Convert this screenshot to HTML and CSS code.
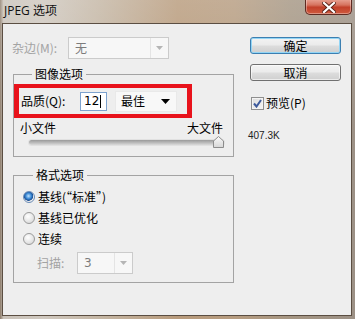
FILE: index.html
```html
<!DOCTYPE html>
<html lang="zh-CN">
<head>
<meta charset="utf-8">
<title>JPEG 选项</title>
<link rel="stylesheet" href="styles.css">
</head>
<body>
<div class="window">
  <div class="titlebar">
    <span class="title">JPEG 选项</span>
    <div class="close">
      <svg width="14" height="11" viewBox="0 0 14 11">
        <path d="M2 1 L12 10 M12 1 L2 10" stroke="#5a2218" stroke-width="4" stroke-linecap="square"/>
        <path d="M2 1 L12 10 M12 1 L2 10" stroke="#ffffff" stroke-width="2.2" stroke-linecap="square"/>
      </svg>
    </div>
  </div>
  <div class="client">
    <div class="left">
      <div class="matte-row">
        <span class="matte-label">杂边(M):</span>
        <div class="select disabled matte">
          <span class="val">无</span>
          <span class="drop"><svg width="7" height="4" viewBox="0 0 7 4"><path d="M0 0 H7 L3.5 4 Z" fill="#b5b5b5"/></svg></span>
        </div>
      </div>
      <fieldset class="group image-group">
        <legend>图像选项</legend>
        <div class="highlight">
          <span class="q-label">品质(Q):</span>
          <div class="input">12<span class="caret"></span></div>
          <div class="select quality">
            <span class="val">最佳</span>
            <svg width="9" height="5" viewBox="0 0 9 5"><path d="M0 0 H9 L4.5 5 Z" fill="#000"/></svg>
          </div>
        </div>
        <div class="size-labels"><span>小文件</span><span>大文件</span></div>
        <div class="slider">
          <div class="track"></div>
          <svg class="thumb" width="11" height="12" viewBox="0 0 11 12">
            <defs>
              <linearGradient id="tg" x1="0" y1="0" x2="0" y2="1">
                <stop offset="0" stop-color="#fbfbfb"/>
                <stop offset="1" stop-color="#d6d6d6"/>
              </linearGradient>
            </defs>
            <path d="M0.5 11.5 V5 L5.5 0.5 L10.5 5 V11.5 Z" fill="url(#tg)" stroke="#8c8c8c"/>
          </svg>
        </div>
      </fieldset>
      <fieldset class="group format-group">
        <legend>格式选项</legend>
        <div class="radio-row"><span class="radio checked"></span><span>基线(“标准”)</span></div>
        <div class="radio-row"><span class="radio"></span><span>基线已优化</span></div>
        <div class="radio-row"><span class="radio"></span><span>连续</span></div>
        <div class="scan-row">
          <span class="scan-label">扫描:</span>
          <div class="select disabled scan">
            <span class="val">3</span>
            <span class="drop"><svg width="7" height="4" viewBox="0 0 7 4"><path d="M0 0 H7 L3.5 4 Z" fill="#b5b5b5"/></svg></span>
          </div>
        </div>
      </fieldset>
    </div>
    <div class="right">
      <div class="btn default">确定</div>
      <div class="btn">取消</div>
      <div class="check-row">
        <span class="checkbox">
          <svg width="9" height="9" viewBox="0 0 9 9"><path d="M1 4.5 L3.5 7.5 L8 1" fill="none" stroke="#3d5a9c" stroke-width="2"/></svg>
        </span>
        <span>预览(P)</span>
      </div>
      <div class="filesize">407.3K</div>
    </div>
  </div>
</div>
</body>
</html>
```
FILE: styles.css
```css
* { box-sizing: border-box; }
html, body { margin: 0; padding: 0; }
body {
  width: 355px;
  height: 319px;
  overflow: hidden;
  font-family: "Noto Sans CJK SC", sans-serif;
  font-size: 12px;
  color: #000;
}
.window {
  height: 319px;
  display: flex;
  flex-direction: column;
  padding: 0 3px 3px 2px;
  background:
    linear-gradient(180deg, rgba(255,255,255,0.18) 0%, rgba(255,255,255,0) 40%),
    linear-gradient(90deg, #8c7b6a 0%, #c9c2b9 1%, #cfc8bf 12%, #c4b6a4 28%, #b89b7c 50%, #b69c80 66%, #a59683 82%, #9c9186 100%);
}
.titlebar {
  height: 23px;
  flex: none;
  display: flex;
  justify-content: space-between;
  align-items: flex-start;
}
.title {
  font-family: "Open Sans", "Noto Sans CJK SC", sans-serif;
  font-size: 12px;
  line-height: 14px;
  padding-top: 4px;
  margin-left: 2px;
  color: #111;
}
.close {
  width: 47px;
  height: 16px;
  margin-top: -1px;
  border: 1px solid #5e2a22;
  border-top: none;
  border-radius: 0 0 5px 5px;
  background: linear-gradient(180deg, #e9a596 0%, #d6735f 40%, #c2402a 55%, #cf5a3e 100%);
  box-shadow: inset 0 0 0 1px rgba(255,255,255,0.35);
  display: flex;
  align-items: center;
  justify-content: center;
  padding-top: 1px;
}
.client {
  flex: 1;
  background: #eeeeee;
  border: 1px solid #5b4e42;
  display: flex;
  padding: 13px 0 0 10px;
}
.left { width: 221px; flex: none; }
.right { width: 91px; flex: none; margin-left: 16px; display: flex; flex-direction: column; }

.matte-row { display: flex; align-items: center; height: 22px; }
.matte-label { width: 56px; color: #a3a3a3; line-height: 14px; margin-left: -1px; }

.select {
  display: flex;
  align-items: center;
  line-height: 14px;
}
.select.disabled {
  border: 1px solid #cbcbcb;
  background: #f7f7f7;
  height: 22px;
}
.select.disabled .val { flex: 1; padding-left: 6px; color: #7c7c7c; }
.select.disabled .drop {
  width: 18px;
  height: 100%;
  border-left: 1px solid #e4e4e4;
  display: flex;
  align-items: center;
  justify-content: center;
}
.matte { width: 101px; }
.scan { width: 56px; }
.scan .val { font-family: "DejaVu Sans", sans-serif; font-size: 12px; }

.group {
  margin: 0;
  padding: 0;
  min-width: 0;
  border: 1px solid #a3a3a3;
}
.group legend {
  padding: 0 3px;
  line-height: 14px;
  font-size: 12px;
}
.image-group { margin-top: 8px; padding-bottom: 8px; }
.image-group legend { margin-left: 18px; }
.format-group { margin-top: 11px; padding-bottom: 8px; }
.format-group legend { margin-left: 19px; }

.highlight {
  margin-top: 3px;
  width: 178px;
  height: 34px;
  border-style: solid;
  border-color: #e8121b;
  border-width: 4px 5px;
  display: flex;
  align-items: center;
}
.q-label { width: 61px; padding-left: 2px; line-height: 14px; }
.input {
  width: 27px;
  height: 19px;
  border: 1px solid #7da2ce;
  background: #fff;
  padding-left: 3px;
  line-height: 17px;
  display: flex;
  align-items: center;
  font-family: "DejaVu Sans", sans-serif;
  font-size: 12px;
}
.caret { width: 1px; height: 13px; background: #000; margin-left: 1px; }
.quality {
  width: 62px;
  height: 21px;
  margin-left: 8px;
  background: #f8f8f8;
  border: 1px solid #e9e9e9;
  padding: 0 6px 0 5px;
  justify-content: space-between;
}

.size-labels {
  margin-top: 3px;
  display: flex;
  justify-content: space-between;
  padding: 0 10px 0 6px;
  line-height: 14px;
}
.slider {
  margin-top: 1px;
  height: 12px;
  display: flex;
  align-items: center;
  padding: 0 9px 0 15px;
}
.track {
  flex: 1;
  height: 5px;
  border-radius: 3px;
  background: linear-gradient(180deg, #9a9a9a 0%, #b9b9b9 50%, #dadada 100%);
  box-shadow: 0 0 0 1px rgba(0,0,0,0.05);
}
.thumb { margin-left: -11px; flex: none; }

.radio-row {
  height: 21px;
  display: flex;
  align-items: center;
  padding-left: 9px;
  line-height: 14px;
}
.radio-row:first-of-type { margin-top: 4px; }
.radio {
  width: 12px;
  height: 12px;
  border-radius: 50%;
  border: 1px solid #9a9a9a;
  background: radial-gradient(circle at 40% 35%, #ffffff 0%, #e6e6e6 55%, #cfcfcf 100%);
  margin-right: 3px;
  flex: none;
}
.radio.checked {
  border-color: #6a8bb6;
  background: radial-gradient(circle at 45% 40%, #bfe3ff 0%, #3a88d4 35%, #1a4f94 55%, #f1f1f1 62%, #e2e2e2 100%);
}
.scan-row {
  margin-top: 3px;
  display: flex;
  align-items: center;
  padding-left: 23px;
}
.scan-label { width: 40px; color: #a3a3a3; line-height: 14px; }

.btn {
  width: 91px;
  height: 17px;
  border: 1px solid #707070;
  border-radius: 3px;
  background: linear-gradient(180deg, #f3f3f3 0%, #ebebeb 48%, #dddddd 52%, #cfcfcf 100%);
  box-shadow: inset 0 0 0 1px rgba(255,255,255,0.6);
  display: flex;
  align-items: center;
  justify-content: center;
  line-height: 14px;
}
.btn.default {
  border-color: #3c7fb1;
  box-shadow: inset 0 0 0 1px #93d5f5;
}
.btn + .btn { margin-top: 10px; }
.check-row {
  margin-top: 15px;
  height: 14px;
  display: flex;
  align-items: center;
  line-height: 14px;
}
.checkbox {
  width: 13px;
  height: 13px;
  margin-left: 1px;
  margin-right: 2px;
  border: 1px solid #8f8f8f;
  background: linear-gradient(135deg, #dcdcdc 0%, #f6f6f6 100%);
  box-shadow: inset 0 0 0 1px #f4f4f4;
  display: flex;
  align-items: center;
  justify-content: center;
}
.filesize {
  margin-top: 20px;
  margin-left: -2px;
  font-family: "Liberation Sans", sans-serif;
  font-size: 10px;
  line-height: 12px;
  color: #222;
}
```
